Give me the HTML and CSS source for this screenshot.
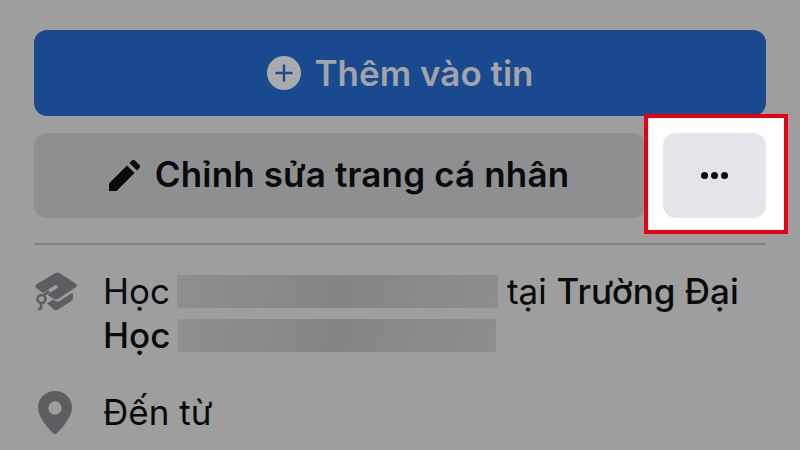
FILE: index.html
```html
<!DOCTYPE html>
<html lang="vi">
<head>
<meta charset="utf-8">
<title>Trang cá nhân</title>
<link rel="stylesheet" href="styles.css">
</head>
<body>
<main class="page">
  <div class="btn btn-primary">
    <svg class="icon-plus" viewBox="0 0 34 34"><circle cx="17" cy="17" r="17" fill="#a9abad"/><path d="M17 8.500v17M8.500 17h17" stroke="#194a8f" stroke-width="2.400" fill="none"/></svg>
    <span>Thêm vào tin</span>
  </div>
  <div class="actions">
    <div class="btn btn-edit">
      <svg class="icon-pen" viewBox="0 0 32 32"><path d="M0 32v-7.500L18 6.500l7.500 7.500L7.500 32z" fill="#0a0a0a"/><path d="M20.500 4l2.700-2.700q1.300-1.300 2.600 0l4.900 4.900q1.300 1.300 0 2.600L28 11.500z" fill="#0a0a0a"/></svg>
      <span class="edit-label">Chỉnh sửa trang cá nhân</span>
    </div>
    <div class="more-wrap">
      <div class="btn btn-more"><i class="dot"></i><i class="dot"></i><i class="dot"></i></div>
    </div>
  </div>
  <hr class="divider">
  <div class="row row-study">
    <svg class="icon-cap" viewBox="0 0 44 42"><path d="M21.500 1q2-1 4 0l16 10.500q3 2 0 4L24 27q-2 1.200-4 0l-7-4.500 10-6.500q1.500-1.500 0-2.500-1-1-2.500 0L9 21 3 16.500q-3-2 0-4.500z" fill="#5d5e61"/><path d="M13 31.500l6-4 2.500 1.500q2 1.200 4 0L37 21.500q2-1 2 1v3.500q0 2-2 3.200L24 37.500q-2 1.200-4 0z" fill="#5d5e61"/><circle cx="7.500" cy="27" r="4" fill="none" stroke="#5d5e61" stroke-width="2.600"/><path d="M7 31v5.500l-3 .5" fill="none" stroke="#5d5e61" stroke-width="2.600"/><path d="M10 23l5-4" stroke="#5d5e61" stroke-width="2.600"/></svg>
    <div class="row-text">
      <div class="line"><span>Học</span><span class="blur blur-a"></span><span>tại <strong>Trường Đại</strong></span></div>
      <div class="line line-2"><strong>Học</strong><span class="blur blur-b"></span></div>
    </div>
  </div>
  <div class="row row-from">
    <svg class="icon-pin" viewBox="0 0 34 43"><path fill-rule="evenodd" d="M17 0c9.500 0 17 7.400 17 16.500 0 9.500-9.500 20-14.500 25.300q-2.500 2.400-5 0C9.500 36.500 0 26 0 16.500 0 7.400 7.500 0 17 0zm0 10.200a6.700 6.700 0 1 0 0 13.400 6.700 6.700 0 0 0 0-13.400z" fill="#5d5e61"/></svg>
    <div class="row-text"><div class="line">Đến từ</div></div>
  </div>
</main>
</body>
</html>
```

FILE: styles.css
```css
* { box-sizing: border-box; }
html, body { margin: 0; padding: 0; }
body {
  width: 800px;
  height: 450px;
  overflow: hidden;
  background: #9e9e9e;
  font-family: Inter, "Liberation Sans", sans-serif;
  color: #0a0a0a;
}
.page {
  padding: 30px 34px 0;
  display: flex;
  flex-direction: column;
}
.btn {
  display: flex;
  align-items: center;
  justify-content: center;
  border-radius: 13px;
  font-size: 35px;
  font-weight: 500;
}
.btn-primary {
  height: 86px;
  background: #194a8f;
  color: #a2a4a8;
  gap: 14px;
  font-weight: 600;
}
.icon-plus { width: 34px; height: 34px; }
.actions {
  display: flex;
  gap: 17px;
  margin-top: 17px;
}
.btn-edit {
  flex: 1;
  height: 85px;
  background: #8e8f91;
  gap: 14px;
  padding: 0 2px 3px 0;
}
.edit-label { font-weight: 600; letter-spacing: .15px; }
.icon-pen { width: 32px; height: 32px; margin-top: 2px; }
.more-wrap {
  position: relative;
  z-index: 0;
}
.more-wrap::before {
  content: "";
  position: absolute;
  z-index: -1;
  top: -19px;
  left: -19px;
  right: -22px;
  bottom: -16px;
  background: #fff;
  border: 4px solid #e60012;
}
.btn-more {
  width: 103px;
  height: 85px;
  background: #e4e5ea;
  gap: 3px;
}
.dot {
  width: 7px;
  height: 7px;
  border-radius: 50%;
  background: #0a0a0a;
}
.divider {
  width: 100%;
  height: 2px;
  margin: 25px 0 0;
  border: 0;
  background: #818181;
}
.row {
  display: flex;
  align-items: flex-start;
}
.row-study { margin-top: 24px; }
.row-from { margin-top: 33px; align-items: center; }
.row-text { font-size: 35px; line-height: 44px; margin-left: 25px; }
.row-from .row-text { margin-left: 31px; }
.icon-cap { width: 44px; height: 42px; margin-top: 3px; flex: none; }
.icon-pin { width: 34px; height: 43px; margin-left: 4px; flex: none; }
.line { display: flex; align-items: center; height: 44px; white-space: pre; }
.line strong { font-weight: 500; }
.blur {
  display: block;
  height: 33px;
  background: linear-gradient(100deg, #8f8f8f, #858585 50%, #8e8e8e);
}
.blur-a { width: 321px; margin: 0 9px 0 7px; }
.blur-b { width: 318px; margin-left: 8px; }
```
